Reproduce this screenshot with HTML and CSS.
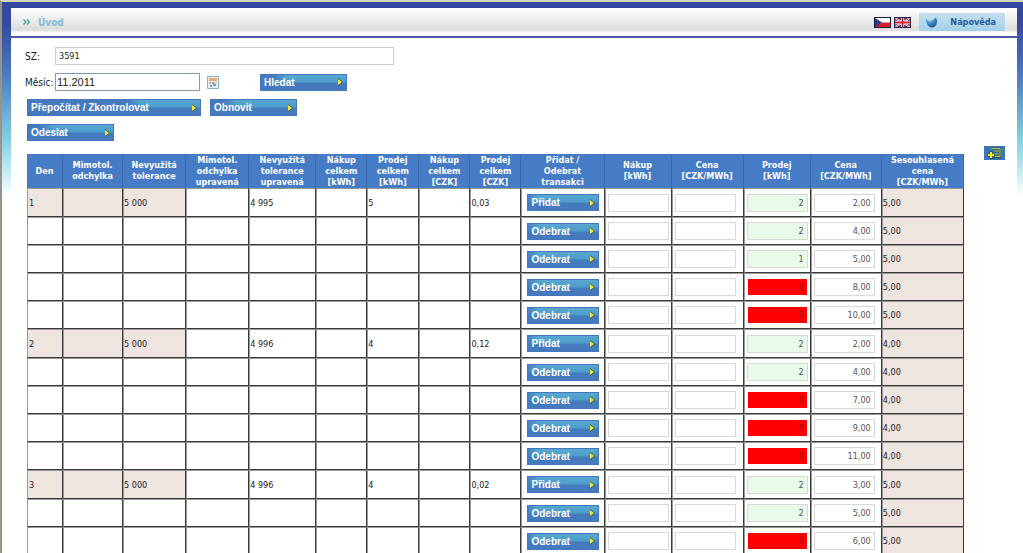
FILE: index.html
```html
<!DOCTYPE html>
<html lang="cs">
<head>
<meta charset="utf-8">
<title>Úvod</title>
<link rel="stylesheet" href="styles.css">
</head>
<body>
<div class="frame">
  <main class="panel">
    <header class="topbar">
      <svg class="chevrons" viewBox="0 0 7 6" aria-hidden="true"><path d="M.5.5 3 3 .5 5.500M4 .5 6.500 3 4 5.500" fill="none" stroke="#3a9a9a" stroke-width="1.200"/></svg>
      <a class="crumb" href="#">Úvod</a>
      <div class="tools">
        <svg class="flag" viewBox="0 0 17 11" role="img" aria-label="Čeština"><path fill="#1b1b3a" d="M0 0h17v11H0z"/><path fill="#fff" d="M1 1h15v5H1z"/><path fill="#d8202c" d="M1 5.500h15V10H1z"/><path fill="#203a90" d="M1 1l7 4.500L1 10z"/></svg>
        <svg class="flag" viewBox="0 0 17 11" role="img" aria-label="English"><path fill="#24306e" d="M0 0h17v11H0z"/><path d="M1 1l15 9M16 1 1 10" stroke="#fff" stroke-width="2"/><path d="M1 1l15 9M16 1 1 10" stroke="#c8202c" stroke-width=".7"/><path d="M8.500 0v11M0 5.500h17" stroke="#fff" stroke-width="3.400"/><path d="M8.500 0v11M0 5.500h17" stroke="#d02030" stroke-width="1.800"/><path d="M.5.5h16v10H.5z" fill="none" stroke="#33264a"/></svg>
        <button class="help" type="button">
          <svg class="orb" viewBox="0 0 13 13" aria-hidden="true"><defs><radialGradient id="orb" cx=".35" cy=".25" r=".8"><stop offset="0" stop-color="#a8d8f0"/><stop offset=".35" stop-color="#4c94cc"/><stop offset="1" stop-color="#17529c"/></radialGradient></defs><path d="M1 3Q2.500 4.500 5.500 4.500T11 1.500Q13 5 11.500 8.500 9.500 12 6 11.500 1.500 10.500 1 3z" fill="url(#orb)"/></svg>
          Nápověda
        </button>
      </div>
    </header>

    <form class="search">
      <div class="line line-sz">
        <label for="sz">SZ:</label>
        <input class="sz" id="sz" value="3591">
      </div>
      <div class="line line-month">
        <label for="month">Měsíc:</label>
        <input class="month" id="month" value="11.2011">
        <svg class="calendar" viewBox="0 0 12 13" role="img" aria-label="Kalendář"><path d="M.5.5h11v12H.5z" fill="#e8f3f7" stroke="#86b4ca"/><path d="M2 2h8v3H2z" fill="#f0a868"/><path d="M2 6h2v2H2zM8 6h2v1H8z" fill="#d9a07a"/><path d="M5 6h2v2H5zM3 9h2v2H3zM6 8h3v2H6z" fill="#6d9db0"/></svg>
        <button class="btn" type="button">Hledat</button>
      </div>
      <div class="line line-actions">
        <button class="btn btn-wide" type="button">Přepočítat / Zkontrolovat</button>
        <button class="btn" type="button">Obnovit</button>
      </div>
      <div class="line line-actions">
        <button class="btn" type="button">Odeslat</button>
      </div>
    </form>

    <section class="results">
      <table class="grid">
        <colgroup>
          <col class="w36"><col class="w60"><col class="w63"><col class="w63"><col class="w67"><col class="w51"><col class="w52"><col class="w51"><col class="w51"><col class="w83"><col class="w67"><col class="w72"><col class="w67"><col class="w71"><col class="w82">
        </colgroup>
        <thead>
          <tr>
            <th>Den</th>
            <th>Mimotol.<br>odchylka</th>
            <th>Nevyužitá<br>tolerance</th>
            <th>Mimotol.<br>odchylka<br>upravená</th>
            <th>Nevyužitá<br>tolerance<br>upravená</th>
            <th>Nákup<br>celkem<br>[kWh]</th>
            <th>Prodej<br>celkem<br>[kWh]</th>
            <th>Nákup<br>celkem<br>[CZK]</th>
            <th>Prodej<br>celkem<br>[CZK]</th>
            <th>Přidat /<br>Odebrat<br>transakci</th>
            <th>Nákup<br>[kWh]</th>
            <th>Cena<br>[CZK/MWh]</th>
            <th>Prodej<br>[kWh]</th>
            <th>Cena<br>[CZK/MWh]</th>
            <th>Sesouhlasená<br>cena<br>[CZK/MWh]</th>
          </tr>
        </thead>
        <tbody id="rows"></tbody>
      </table>
      <button class="export" type="button" aria-label="Export">
        <svg viewBox="0 0 21 14" aria-hidden="true"><path d="M0 0h21v14H0z" fill="#3c78b4"/><path d="M8 2.500h8v9H9M10 5.500h5M10 8.500h5" fill="none" stroke="#2a5468" stroke-width="2"/><path d="M8 2.500h8v8H9M10 5h5M10 8h5" fill="none" stroke="#b8c840"/><path d="M7 5v8M3.500 9h7" stroke="#2a5468" stroke-width="3.500"/><path d="M7 6v6M4 9h6" stroke="#f8e820" stroke-width="2"/></svg>
      </button>
    </section>
  </main>
</div>
<script src="script.js"></script>
</body>
</html>
```
FILE: styles.css
```css
* { box-sizing: border-box; }

html { scrollbar-width: none; }

body {
  margin: 0;
  background: #fff;
  color: #222;
  font-family: "DejaVu Sans Condensed", "DejaVu Sans", sans-serif;
  font-size: 10px;
}

button, input { font-family: inherit; font-size: inherit; margin: 0; }

.frame {
  min-height: 100vh;
  padding: 6px 6px 0 9px;
  border-top: 2px solid #d8d8b8;
  border-left: 2px solid #98948c;
  background: linear-gradient(#35489f 0, #35489f 20px, #4a78bc 70px, #84d4e4 140px, #fff 195px);
}

.panel { background: #fff; }

.topbar {
  display: flex;
  align-items: center;
  height: 30px;
  padding: 0 12px;
  border-bottom: 2px solid #4a5aa8;
  background: linear-gradient(#fff 0, #f4f4f4 25%, #dcdcdc 78%, #fff 88%, #fff 100%);
}

.chevrons { width: 7px; height: 6px; }

.crumb {
  margin-left: 8px;
  color: #80bcd8;
  font-weight: bold;
  text-decoration: none;
}

.tools { display: flex; align-items: center; gap: 3px; margin-left: auto; }

.flag { width: 17px; height: 11px; }

.help {
  display: flex;
  align-items: center;
  justify-content: space-between;
  width: 86px;
  height: 18px;
  margin-left: 5px;
  padding: 0 9px 0 6px;
  border: 0;
  background: linear-gradient(#c4e0ef, #a4d0e8);
  color: #28589c;
  font-size: 9px;
  font-weight: bold;
}

.orb { width: 13px; height: 13px; }

.search {
  display: flex;
  flex-direction: column;
  gap: 8px;
  padding: 9px 14px 0;
}

.line { display: flex; align-items: center; }

.line label { width: 30px; white-space: nowrap; }

.sz, .month { height: 18px; border: 1px solid #ccc; background: #fff; color: #222; }

.sz { width: 339px; padding: 0 3px; font-size: 9px; }

.month {
  width: 145px;
  padding: 0 1px;
  border-color: #7f9db9;
  font-family: "Liberation Sans", Arial, sans-serif;
  font-size: 11px;
}

.calendar { width: 12px; height: 13px; margin: 0 41px 0 7px; }

.line-actions { gap: 9px; padding-left: 2px; }

.btn {
  width: 87px;
  height: 17px;
  padding: 0 0 0 3px;
  border: 1px solid #4377bd;
  background:
    url("data:image/svg+xml,%3Csvg xmlns='http://www.w3.org/2000/svg' viewBox='0 0 6 8'%3E%3Cpath d='M1 0l5 4-5 4z' fill='%23345a50'/%3E%3Cpath d='M1 1l4 3-4 3z' fill='%23f0e840'/%3E%3C/svg%3E") right 3px center / 6px 8px no-repeat,
    linear-gradient(90deg, #467abf, transparent 12px) right / 72px 100% no-repeat,
    linear-gradient(#58a8d2, #4c9ccc 48%, #467abf 52%) right / 72px 100% no-repeat,
    #467abf;
  color: #fff;
  font: bold 10px/15px "Liberation Sans", Arial, sans-serif;
  text-align: left;
  white-space: nowrap;
}

.btn-wide { width: 174px; }

.results {
  display: flex;
  align-items: flex-start;
  gap: 20px;
  margin-top: 5px;
  padding: 0 12px 0 16px;
}

.export { width: 21px; height: 14px; padding: 0; border: 0; background: none; }

.export svg { display: block; width: 21px; height: 14px; }

.grid {
  flex: 1;
  width: 100%;
  margin-top: 8px;
  border-collapse: separate;
  border-spacing: 0;
  table-layout: fixed;
}

.w36 { width: 36px; }
.w51 { width: 51px; }
.w52 { width: 52px; }
.w60 { width: 60px; }
.w63 { width: 63px; }
.w67 { width: 67px; }
.w71 { width: 71px; }
.w72 { width: 72px; }
.w82 { width: 82px; }
.w83 { width: 83px; }

.grid th {
  height: 34px;
  padding: 0;
  border-right: 1px solid #3866ac;
  background: #467cc6;
  color: #fff;
  font-size: 9px;
  line-height: 11px;
}

.grid td {
  height: 28px;
  padding: 0;
  border: 1px solid #3a3a3a;
  border-top-color: #999;
  border-left-color: #999;
  font-size: 9px;
}

.grid .day td { height: 29px; }

.grid .shade { background: #eee4e0; }

.grid td:first-child { padding-left: 1px; }

.grid .action { padding-left: 5px; }

.grid .entry { padding-left: 2px; }

.grid .btn { display: block; width: 72px; }

.entry input {
  display: block;
  width: 61px;
  height: 18px;
  padding: 0 3px;
  border: 1px solid #d8d8d8;
  background: #fff;
  color: #555;
  text-align: right;
}

.entry .matched { background: #e8fbe8; }

.entry .rejected { border-color: #fff; background: #f00; color: #a01818; }
```
FILE: script.js
```js
const days = [
  { day: 1, tolerance: "5 000", adjusted: "4 995", sold: "5", soldCzk: "0,03", agreed: "5,00",
    offers: [["2", "2,00"], ["2", "4,00"], ["1", "5,00"], ["0", "8,00"], ["0", "10,00"]] },
  { day: 2, tolerance: "5 000", adjusted: "4 996", sold: "4", soldCzk: "0,12", agreed: "4,00",
    offers: [["2", "2,00"], ["2", "4,00"], ["0", "7,00"], ["0", "9,00"], ["0", "11,00"]] },
  { day: 3, tolerance: "5 000", adjusted: "4 996", sold: "4", soldCzk: "0,02", agreed: "5,00",
    offers: [["2", "3,00"], ["2", "5,00"], ["0", "6,00"]] },
];

const entry = (label, value, state) =>
  `<td class="entry"><input class="${state}" aria-label="${label}" value="${value}"></td>`;

const row = (d, [amount, price], first) => {
  const text = (value) => `<td>${first ? value : ""}</td>`;
  const shaded = (value) => (first ? `<td class="shade">${value}</td>` : "<td></td>");
  return `<tr class="${first ? "day" : "offer"}">` +
    shaded(d.day) + shaded("") + shaded(d.tolerance) +
    text("") + text(d.adjusted) + text("") + text(d.sold) + text("") + text(d.soldCzk) +
    `<td class="action"><button class="btn" type="button">${first ? "Přidat" : "Odebrat"}</button></td>` +
    entry("Nákup", "", "empty") + entry("Cena nákupu", "", "empty") +
    entry("Prodej", amount, amount === "0" ? "rejected" : "matched") +
    entry("Cena prodeje", price, "price") +
    `<td class="shade">${d.agreed}</td></tr>`;
};

document.getElementById("rows").innerHTML = days
  .flatMap((d) => d.offers.map((offer, i) => row(d, offer, i === 0)))
  .join("");
```
